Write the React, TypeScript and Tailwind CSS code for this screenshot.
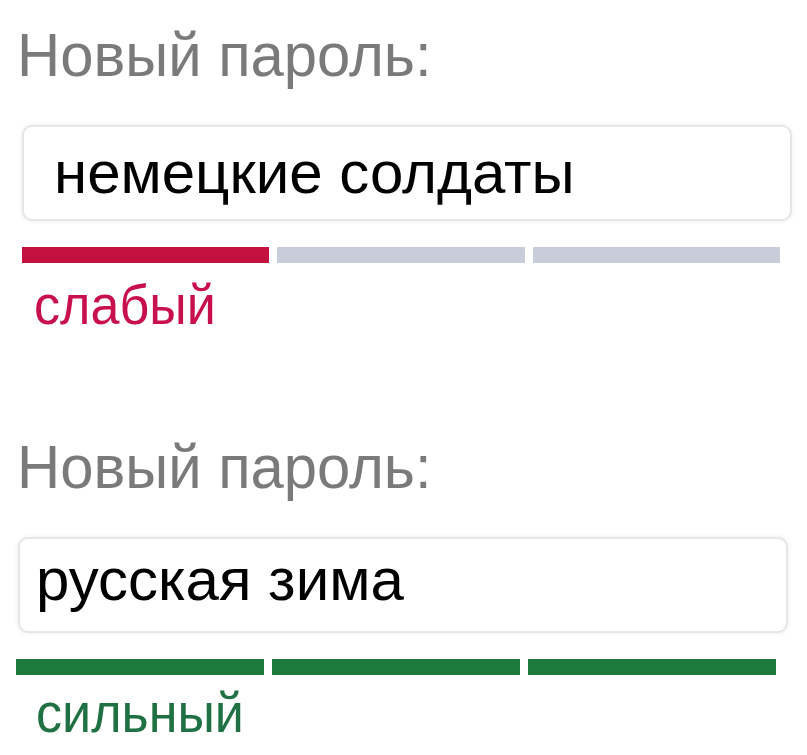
const FONT = "font-['Liberation_Sans',Arial,sans-serif]";

type Strength = {
  value: string;
  label: string;
  filled: number;
  bar: string;
  text: string;
  // the two screenshots were cropped a few pixels apart, so each row keeps its own offsets
  box: string;
  bars: string;
  labelPos: string;
};

const rows: Strength[] = [
  {
    value: "немецкие солдаты",
    label: "слабый",
    filled: 1,
    bar: "bg-[#c4103f]",
    text: "text-[#c8104f]",
    box: "ml-[22px] mr-[15px] pl-[30px]",
    bars: "ml-[22px] mr-[27px]",
    labelPos: "mt-[14px] ml-[34px]",
  },
  {
    value: "русская зима",
    label: "сильный",
    filled: 3,
    bar: "bg-[#1b7a3c]",
    text: "text-[#1f7042]",
    box: "ml-[18px] mr-[19px] pl-[16px] pb-[10px]",
    bars: "ml-[16px] mr-[31px]",
    labelPos: "mt-[10px] ml-[36px]",
  },
];

function PasswordField({ row }: { row: Strength }) {
  return (
    <div>
      <p className="ml-[17px] origin-left scale-x-[0.98] text-[61px] leading-none text-[#7a7a7a]">
        Новый пароль:
      </p>
      <div
        className={`mt-[39px] flex h-[96px] items-center rounded-[10px] border-2 border-[#e6e6e6] bg-white shadow-[0_0_5px_rgba(0,0,0,0.08)] ${row.box}`}
      >
        <span className="text-[60px] leading-none text-black">{row.value}</span>
      </div>
      <div className={`mt-[26px] grid grid-cols-3 gap-[8px] ${row.bars}`}>
        {[0, 1, 2].map((i) => (
          <div
            key={i}
            className={`h-[16px] ${i < row.filled ? row.bar : "bg-[#c9cdd9]"}`}
          />
        ))}
      </div>
      <p
        className={`origin-left scale-x-[0.93] text-[56px] leading-none ${row.text} ${row.labelPos}`}
      >
        {row.label}
      </p>
    </div>
  );
}

export default function App() {
  return (
    <div className={`h-[755px] w-[807px] overflow-hidden bg-white pt-[25px] ${FONT}`}>
      <div className="flex flex-col gap-[104px]">
        {rows.map((row) => (
          <PasswordField key={row.label} row={row} />
        ))}
      </div>
    </div>
  );
}
